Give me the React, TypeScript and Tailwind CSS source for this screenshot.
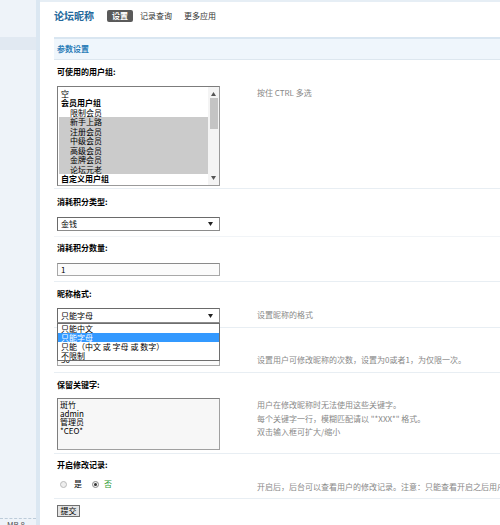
import React from "react";

function Arrow() {
  return (
    <svg width="5" height="4" viewBox="0 0 5 4" className="block">
      <path d="M0 0H5L2.5 4Z" fill="#222" />
    </svg>
  );
}

function Select({ value, open }: { value: string; open?: boolean }) {
  return (
    <div className="relative w-[163px]">
      <div className="flex h-[15px] items-center justify-between border border-[#8c8c8c] border-t-[#6a6a6a] border-l-[#6a6a6a] bg-white pl-[3px] pr-[6px] leading-[13px] text-black">
        <span>{value}</span>
        <Arrow />
      </div>
      {open && (
        <div className="absolute left-0 top-full z-10 w-[163px] border border-[#6e6e6e] bg-white leading-[9px] text-black">
          <div className="pl-[3px]">只能中文</div>
          <div className="bg-[#3399ff] pl-[3px] text-white">只能字母</div>
          <div className="pl-[3px]">只能（中文 或 字母 或 数字）</div>
          <div className="pl-[3px]">不限制</div>
        </div>
      )}
    </div>
  );
}

function Label({ text, h }: { text: string; h: string }) {
  return (
    <div className={`flex items-center pl-[3px] font-bold text-black ${h}`}>{text}</div>
  );
}

export default function App() {
  const groups: { t: string; bold?: boolean; indent?: boolean; sel?: boolean }[] = [
    { t: "空" },
    { t: "会员用户组", bold: true },
    { t: "限制会员", indent: true },
    { t: "新手上路", indent: true, sel: true },
    { t: "注册会员", indent: true, sel: true },
    { t: "中级会员", indent: true, sel: true },
    { t: "高级会员", indent: true, sel: true },
    { t: "金牌会员", indent: true, sel: true },
    { t: "论坛元老", indent: true, sel: true },
    { t: "自定义用户组", bold: true },
  ];

  return (
    <div className="flex h-[525px] w-[500px] overflow-hidden bg-white font-['Noto_Sans_CJK_SC',sans-serif] text-[8px] text-[#333]">
      <aside className="flex w-[40px] shrink-0 flex-col border-r-[4px] border-[#dbe7f2] bg-[#eef3f9]">
        <div className="mt-[37px] h-[13px] bg-[#e1e9f2]" />
        <div className="mt-auto h-[7px] overflow-hidden border-t border-dashed border-[#bccbd9] pl-[7px] leading-[12px] text-[#555]">
          MB 8
        </div>
      </aside>

      <main className="min-w-0 flex-1 border-t-[2px] border-[#e6eef5] pl-[14px]">
        <div className="flex h-[35px] items-start pt-[8px]">
          <span className="mr-[13px] text-[10px] font-bold leading-[12px] text-[#23689b]">论坛昵称</span>
          <div className="flex gap-[2px] leading-[12px]">
            <span className="rounded-[2px] bg-[#5a5a5a] px-[5px] font-bold text-white">设置</span>
            <span className="px-[5px] text-[#333]">记录查询</span>
            <span className="px-[5px] text-[#333]">更多应用</span>
          </div>
        </div>

        <div className="flex h-[23px] items-center border-t-[2px] border-b border-t-[#d9e6f1] border-b-[#dde7ef] bg-[#eff6fc] pl-[3px] font-bold text-[#2b7db8]">
          参数设置
        </div>

        <Label text="可使用的用户组:" h="h-[24px]" />
        <div className="flex h-[105px] border-b border-[#e8eef3]">
          <div className="w-[203px] shrink-0 pl-[3px] pt-[2px]">
            <div className="flex h-[100px] w-[163px] border border-[#9a9a9a] border-t-[#7c7c7c] border-l-[#7c7c7c] bg-white">
              <div className="flex-1 pl-[1px] pt-[1.5px] leading-[9.5px] text-black">
                {groups.map((g) => (
                  <div
                    key={g.t}
                    className={`${g.indent ? "pl-[11px]" : "pl-[2px]"} ${g.bold ? "font-bold" : ""} ${g.sel ? "bg-[#cbcbcb]" : ""}`}
                  >
                    {g.t}
                  </div>
                ))}
              </div>
              <div className="flex w-[11px] flex-col items-center bg-[#f4f4f4]">
                <svg width="5" height="4" viewBox="0 0 5 4" className="mt-[5px]">
                  <path d="M0 4H5L2.5 0Z" fill="#555" />
                </svg>
                <div className="mt-[2px] h-[31px] w-[8px] bg-[#c4c4c4]" />
                <div className="flex-1" />
                <svg width="5" height="4" viewBox="0 0 5 4" className="mb-[5px]">
                  <path d="M0 0H5L2.5 4Z" fill="#555" />
                </svg>
              </div>
            </div>
          </div>
          <div className="pt-[4px] leading-[10px] text-[#888]">按住 CTRL 多选</div>
        </div>

        <Label text="消耗积分类型:" h="h-[26px]" />
        <div className="flex h-[22px] border-b border-[#f1f4f7]">
          <div className="w-[203px] shrink-0 pl-[3px] pt-[2px]">
            <div className="flex h-[14px] w-[163px] items-center justify-between border border-[#8c8c8c] border-t-[#6a6a6a] border-l-[#6a6a6a] bg-white pl-[3px] pr-[6px] text-black">
              <span>金钱</span>
              <Arrow />
            </div>
          </div>
        </div>

        <Label text="消耗积分数量:" h="h-[22px]" />
        <div className="flex h-[23px] border-b border-[#e8eef3]">
          <div className="w-[203px] shrink-0 pl-[3px] pt-[4px]">
            <div className="flex h-[13px] w-[163px] items-center border border-[#a8a8a8] border-t-[#8a8a8a] bg-[#fbfbfb] pl-[3px] text-black">
              1
            </div>
          </div>
        </div>

        <Label text="昵称格式:" h="h-[23px]" />
        <div className="flex h-[23px] border-b border-[#e8eef3]">
          <div className="w-[203px] shrink-0 pl-[3px] pt-[3px]">
            <Select value="只能字母" open />
          </div>
          <div className="pt-[5px] leading-[10px] text-[#888]">设置昵称的格式</div>
        </div>

        <Label text="允许修改次数:" h="h-[24px]" />
        <div className="flex h-[21px] border-b border-[#e8eef3]">
          <div className="w-[203px] shrink-0 pl-[3px] pt-[1px]">
            <div className="flex h-[13px] w-[163px] items-center border border-[#a8a8a8] border-t-[#8a8a8a] bg-[#fbfbfb] pl-[3px] text-black">
              30
            </div>
          </div>
          <div className="pt-[3px] leading-[10px] text-[#888]">设置用户可修改昵称的次数，设置为0或者1，为仅限一次。</div>
        </div>

        <Label text="保留关键字:" h="h-[23px]" />
        <div className="flex h-[58px] border-b border-[#e8eef3]">
          <div className="w-[203px] shrink-0 pl-[3px] pt-[2px]">
            <div className="h-[52px] w-[163px] border border-[#a0a0a0] border-t-[#7e7e7e] border-l-[#7e7e7e] bg-[#f7f7f7] pl-[2px] pt-[2px] leading-[8.7px] text-black">
              <div>斑竹</div>
              <div>admin</div>
              <div>管理员</div>
              <div>*CEO*</div>
            </div>
          </div>
          <div className="pt-[2px] leading-[13.5px] text-[#888]">
            <div>用户在修改昵称时无法使用这些关键字。</div>
            <div>每个关键字一行，模糊匹配请以 "*XXX*" 格式。</div>
            <div>双击输入框可扩大/缩小</div>
          </div>
        </div>

        <Label text="开启修改记录:" h="h-[22px]" />
        <div className="flex h-[23px] border-b border-[#e8eef3]">
          <div className="flex w-[203px] shrink-0 items-start pl-[6px] pt-[3px] leading-[10px]">
            <span className="mt-[1.5px] h-[7px] w-[7px] rounded-full border border-[#b9b9b9] bg-[#eeeeee]" />
            <span className="ml-[7px] text-black">是</span>
            <span className="ml-[10px] mt-[1.5px] flex h-[7px] w-[7px] items-center justify-center rounded-full border border-[#8a8a8a] bg-[#f2f2f2]">
              <span className="h-[3px] w-[3px] rounded-full bg-[#333]" />
            </span>
            <span className="ml-[5px] text-[#2e9a33]">否</span>
          </div>
          <div className="whitespace-nowrap pt-[6px] leading-[10px] text-[#888]">
            开启后，后台可以查看用户的修改记录。注意：只能查看开启之后用户的修改记录。
          </div>
        </div>

        <div className="pl-[3px] pt-[6px]">
          <button className="h-[12px] w-[23px] border border-[#707070] bg-[#e4e4e4] text-center text-[8px] leading-[10px] text-black">
            提交
          </button>
        </div>
      </main>
    </div>
  );
}
